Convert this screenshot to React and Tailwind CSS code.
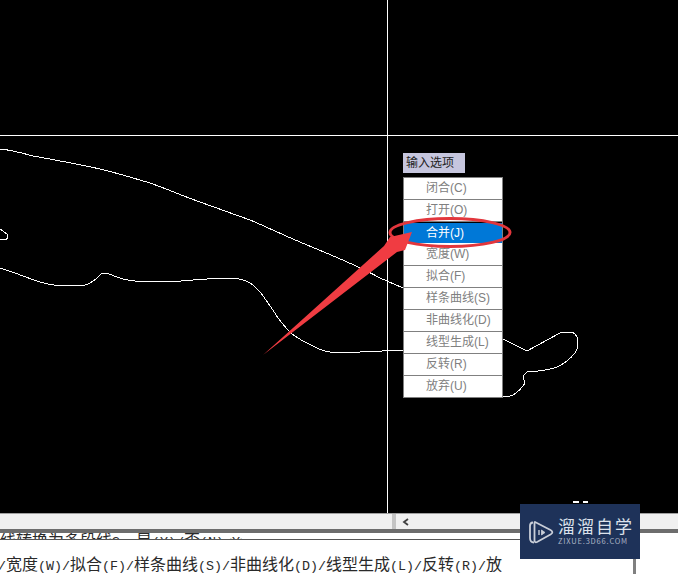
import React from 'react';

const MENU_ITEMS = [
    '闭合(C)',
    '打开(O)',
    '合并(J)',
    '宽度(W)',
    '拟合(F)',
    '样条曲线(S)',
    '非曲线化(D)',
    '线型生成(L)',
    '反转(R)',
    '放弃(U)',
];

// cjk chars are 16px, latin ones are half of that
const CommandText = ({ text }) => (
    <>
        {text.split(/([\u4e00-\u9fff]+)/).map((part, i) =>
            i % 2 === 1 ? (
                <span key={i} className="text-[16px]">{part}</span>
            ) : (
                <span key={i} className="text-[13.33px]">{part}</span>
            )
        )}
    </>
);

const Drawing = () => (
    <svg className="absolute inset-0" width="678" height="513" fill="none" stroke="#ffffff" strokeWidth="1" shapeRendering="crispEdges">
        <path d="M387.5 0V513M0 135.5H678" />
        <path d="M0 149C12 150 22 153 33 156C55 160 78 164 100 169C117 173 133 178 150 183C167 189 183 196 200 202C217 208 233 214 250 220C267 227 283 235 300 242C328 254 355 264 380 278L403 288" />
        <path d="M0 229L7 234L8 238L5 240L0 239" />
        <path d="M0 268C14 272 27 278 40 282C50 285 60 286 70 286C78 286 84 286 88 284C92 282 95 280 97 278L102 273H107C114 276 120 279 128 280C138 282 150 282 160 282C176 282 190 280 207 279C215 278 225 278 233 278C240 279 245 280 250 283C256 287 258 290 260 292C265 298 269 305 273 310C278 319 284 326 290 332C295 337 301 340 307 343C314 347 322 351 330 352C340 353 350 352 360 352C375 351 390 351 403 350" />
        <path d="M503 339L527 351L560 333C564 332 568 332 572 332C576 334 578 338 578 342C578 346 577 350 575 353C570 359 564 364 557 367C548 371 537 371 527 372L523 376L525 383C522 388 518 392 513 395C509 397 506 397 502 397" />
        <path d="M573 503C575 501 577 501 579 503M583 503C585 501 586 501 588 503" strokeWidth="2" />
    </svg>
);

const OptionMenu = () => (
    <div className="absolute left-[403px] top-[153px] w-[100px] font-['Liberation_Sans','Noto_Sans_CJK_SC',sans-serif] text-[12px]">
        <div className="w-[62px] h-[20px] bg-[#c6c6de] text-[#222222] pl-[3px] leading-[20px]">输入选项</div>
        <div className="mt-[4px] bg-white border-t border-x border-[#808080]">
            {MENU_ITEMS.map((item, i) => (
                <div
                    key={item}
                    className={
                        i === 2
                            ? 'h-[22px] pl-[22px] leading-[20px] bg-[#0078d7] text-white border-y border-black border-b-white'
                            : 'h-[22px] pl-[22px] leading-[21px] text-[#808080] border-b border-[#808080]'
                    }
                >
                    {item}
                </div>
            ))}
        </div>
    </div>
);

const Annotation = () => (
    <svg className="absolute inset-0 pointer-events-none" width="678" height="574" fill="none">
        <ellipse cx="450" cy="232.5" rx="60" ry="14" stroke="#e2363c" strokeWidth="3" />
        <path d="M263 355L384 246L390 237L412 232L405 250L397 252Z" fill="#f03c42" />
    </svg>
);

const Watermark = () => (
    <div className="absolute left-[520px] top-[504px] w-[120px] h-[55px] bg-[#1e3259] flex items-center pl-[8px] gap-[4px]">
        <svg width="26" height="26" viewBox="0 0 26 26" fill="none" stroke="#c9ced8" strokeLinejoin="round">
            <path d="M5 3.5C2.5 3.5 2 5 2 7V19C2 22 3.500 23.500 6 23.500" strokeWidth="1.800" />
            <path d="M7 3L22.500 11C25 12.500 25 14 22.500 15.500L9 23C7.500 23.800 6.500 23 6.500 21.500V4C6.500 3 6.800 3 7 3Z" strokeWidth="1.800" />
            <path d="M11 11V16" strokeWidth="1.400" />
            <path d="M13.500 11L17 13.500L13.500 16Z" fill="#c9ced8" strokeWidth="0.800" />
        </svg>
        <div className="-mt-[2px] flex flex-col font-['Noto_Sans_CJK_SC','Noto_Sans',sans-serif]">
            <span className="text-[17px] leading-[20px] tracking-[2px] text-[#dde2ec] whitespace-nowrap">溜溜自学</span>
            <span className="text-[7.5px] leading-[10px] tracking-[0.8px] text-[#aab2c4] whitespace-nowrap">ZIXUE.3D66.COM</span>
        </div>
    </div>
);

const App = () => {
    return (
        <div className="relative w-[678px] h-[574px] overflow-hidden bg-white flex flex-col">
            <div className="relative h-[513px] bg-black shrink-0">
                <Drawing />
                <OptionMenu />
            </div>
            <div className="h-[16px] shrink-0 bg-[#f0f0f0] border-t border-[#a0a0a0] flex items-center pl-[392px]">
                <div className="w-[4px] h-full bg-[#c4c4c4]" />
                <svg className="ml-[6px]" width="8" height="8" viewBox="0 0 8 8" fill="none" stroke="#404040" strokeWidth="1.800">
                    <path d="M6 1L2 4L6 7" />
                </svg>
            </div>
            <div className="h-[4px] shrink-0 bg-[#6d6d6d]" />
            <div className="flex-1 flex font-['Liberation_Mono','Noto_Sans_CJK_SC',monospace] text-[#2a2a2a]">
                <div className="w-[636px] shrink-0 border-r-[3px] border-[#808080]">
                    <div className="h-[7px] overflow-hidden border-b border-[#555555] whitespace-nowrap leading-[18px]">
                        <CommandText text="线转换为多段线? :是(Y)/否(N)<Y>" />
                    </div>
                    <div className="-ml-[2px] pt-[17px] whitespace-nowrap leading-[18px]">
                        <CommandText text="/宽度(W)/拟合(F)/样条曲线(S)/非曲线化(D)/线型生成(L)/反转(R)/放" />
                    </div>
                </div>
                <div className="flex-1 flex flex-col justify-end">
                    <div className="h-[2px] border-b border-[#a0a0a0]" />
                </div>
            </div>
            <Watermark />
            <Annotation />
        </div>
    );
};

export default App;
